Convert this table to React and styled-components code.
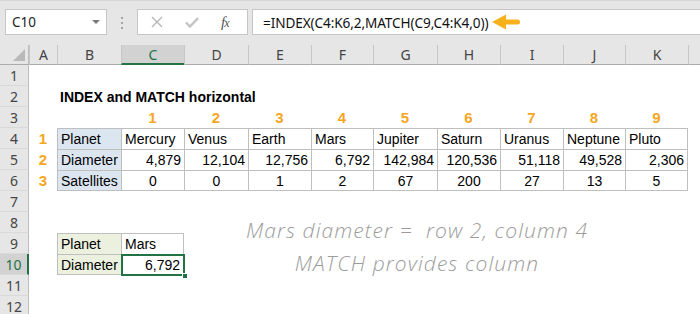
import React from 'react';
import styled, { createGlobalStyle } from 'styled-components';

const GlobalStyle = createGlobalStyle`
  html, body { margin: 0; padding: 0; background: #ffffff; }
  body { width: 700px; height: 314px; overflow: hidden; }
  * { box-sizing: border-box; }
`;

const GREEN = '#217346';
const ORANGE = '#f5a623';

const Frame = styled.div`
  width: 700px;
  height: 314px;
  overflow: hidden;
  background: #fff;
  display: flex;
  flex-direction: column;
`;

const Toolbar = styled.div`
  height: 45px;
  flex: none;
  background: #e6e6e6;
  border-top: 1px solid #d6d6d6;
  display: flex;
  align-items: flex-start;
  padding: 8px 0 0 5px;
  font-family: "Noto Sans", "Open Sans", sans-serif;
`;

const NameBox = styled.div`
  width: 102px;
  height: 26px;
  background: #fff;
  border: 1px solid #c6c6c6;
  display: flex;
  align-items: center;
  justify-content: space-between;
  padding: 0 6px 0 6px;
  font-size: 13.5px;
  color: #222;
`;

const DropTri = styled.span`
  width: 0;
  height: 0;
  border-left: 4px solid transparent;
  border-right: 4px solid transparent;
  border-top: 4px solid #7a7a7a;
`;

const Grip = styled.div`
  width: 2px;
  margin: 8px 14px 0 14px;
  display: flex;
  flex-direction: column;
  gap: 3px;
`;

const Dot = styled.span`
  width: 2px;
  height: 2px;
  background: #a4a4a4;
`;

const FxButtons = styled.div`
  width: 111px;
  height: 26px;
  background: #fff;
  border: 1px solid #c6c6c6;
  display: flex;
  align-items: center;
  padding-left: 13px;
`;

const IconSlot = styled.span`
  display: inline-flex;
  align-items: center;
  justify-content: center;
  margin-right: ${(p) => p.$gap}px;
`;

const FxLabel = styled.span`
  font-family: "Liberation Serif", "DejaVu Serif", serif;
  font-style: italic;
  color: #555;
  font-size: 15px;
  letter-spacing: -1px;
  & > small { font-size: 12px; }
`;

const FormulaBox = styled.div`
  flex: 1;
  height: 26px;
  margin-left: 4px;
  background: #fff;
  border: 1px solid #c6c6c6;
  border-right: none;
  display: flex;
  align-items: center;
  padding-left: 10px;
  gap: 4px;
  font-size: 13.6px;
  color: #111;
`;

const FormulaText = styled.span`
  white-space: nowrap;
  letter-spacing: -0.1px;
`;

const Sheet = styled.div`
  position: relative;
  flex: 1;
  display: grid;
  grid-template-columns: 29px 28px 64px 63px 64px 63px 62px 64px 63px 63px 62px 63px 1fr;
  grid-template-rows: 20px repeat(12, 21px);
  font-family: "Liberation Sans", Arial, sans-serif;
  font-size: 14px;
  color: #000;
`;

const Corner = styled.div`
  background: #e6e6e6;
  border-right: 1px solid #bdbdbd;
  border-bottom: 1px solid #ababab;
  position: relative;
  display: flex;
  align-items: flex-end;
  justify-content: flex-end;
  padding: 0 3px 3px 0;
`;

const CornerTri = styled.span`
  width: 0;
  height: 0;
  border-left: 12px solid transparent;
  border-bottom: 12px solid #b9b9b9;
`;

const ColHeader = styled.div`
  background: ${(p) => (p.$sel ? '#d2d2d2' : '#e6e6e6')};
  border-left: 1px solid #c6c6c6;
  border-bottom: ${(p) => (p.$sel ? `2px solid ${GREEN}` : '1px solid #ababab')};
  color: ${(p) => (p.$sel ? GREEN : '#444')};
  font-family: "Noto Sans", "Open Sans", sans-serif;
  font-size: 14px;
  display: flex;
  align-items: center;
  justify-content: center;
  padding-top: ${(p) => (p.$sel ? '1px' : '0')};
`;

const RowHeader = styled.div`
  background: ${(p) => (p.$sel ? '#d2d2d2' : '#e6e6e6')};
  border-right: ${(p) => (p.$sel ? `2px solid ${GREEN}` : '1px solid #bdbdbd')};
  border-bottom: 1px solid #d9d9d9;
  color: ${(p) => (p.$sel ? GREEN : '#444')};
  font-family: "Noto Sans", "Open Sans", sans-serif;
  font-size: 14px;
  display: flex;
  align-items: center;
  justify-content: center;
`;

const Cell = styled.div`
  position: relative;
  background: ${(p) => p.$bg || 'transparent'};
  border-top: ${(p) => (p.$bt ? '1px solid #bfbfbf' : 'none')};
  border-left: ${(p) => (p.$bl ? '1px solid #bfbfbf' : 'none')};
  border-right: ${(p) => (p.$br ? '1px solid #bfbfbf' : 'none')};
  border-bottom: ${(p) => (p.$bb ? '1px solid #bfbfbf' : 'none')};
  display: flex;
  justify-content: ${(p) =>
    p.$align === 'right' ? 'flex-end' : p.$align === 'center' ? 'center' : 'flex-start'};
  padding: ${(p) => (p.$bt ? '1px' : '2px')} 3px 0 3px;
  line-height: 18px;
  white-space: nowrap;
  font-weight: ${(p) => (p.$bold ? 700 : 400)};
  color: ${(p) => p.$color || '#000'};
  font-size: ${(p) => (p.$big ? '15px' : '14px')};
  z-index: ${(p) => (p.$over ? 1 : 0)};
`;

const Selection = styled.div`
  position: absolute;
  top: -1px;
  left: -1px;
  right: -2px;
  bottom: -2px;
  border: 2px solid ${GREEN};
  pointer-events: none;
`;

const Handle = styled.span`
  position: absolute;
  right: -5px;
  bottom: -5px;
  width: 6px;
  height: 6px;
  background: ${GREEN};
  border: 1px solid #fff;
`;

const Note = styled.div`
  position: absolute;
  left: 217px;
  top: 169px;
  width: 400px;
  text-align: center;
  font-family: "Open Sans", "Noto Sans", sans-serif;
  font-style: italic;
  font-weight: 300;
  font-size: 21px;
  letter-spacing: 1.1px;
  line-height: 33px;
  color: #9c9c9c;
  white-space: pre;
  z-index: 2;
`;

const LETTERS = ['A', 'B', 'C', 'D', 'E', 'F', 'G', 'H', 'I', 'J', 'K', ''];
const planets = ['Mercury', 'Venus', 'Earth', 'Mars', 'Jupiter', 'Saturn', 'Uranus', 'Neptune', 'Pluto'];
const diam = ['4,879', '12,104', '12,756', '6,792', '142,984', '120,536', '51,118', '49,528', '2,306'];
const sats = ['0', '0', '1', '2', '67', '200', '27', '13', '5'];

function cellSpec(r, c) {
  // c: 0 = A ... 10 = K, 11 = L
  const s = {};
  if (r === 2 && c === 1) return { text: 'INDEX and MATCH horizontal', bold: true, over: true };
  if (r === 3 && c >= 2 && c <= 10) return { text: String(c - 1), bold: true, big: true, color: ORANGE, align: 'center' };
  if (r >= 4 && r <= 6 && c === 0) return { text: String(r - 3), bold: true, big: true, color: ORANGE, align: 'center' };
  if (r >= 4 && r <= 6 && c >= 1 && c <= 10) {
    s.bt = true; s.bl = true; s.br = c === 10; s.bb = r === 6;
    if (c === 1) {
      s.bg = '#dce6f1';
      s.text = ['Planet', 'Diameter', 'Satellites'][r - 4];
    } else if (r === 4) {
      s.text = planets[c - 2];
    } else if (r === 5) {
      s.text = diam[c - 2]; s.align = 'right';
    } else {
      s.text = sats[c - 2]; s.align = 'center';
    }
    return s;
  }
  if ((r === 9 || r === 10) && (c === 1 || c === 2)) {
    s.bt = true; s.bl = true; s.br = c === 2; s.bb = r === 10;
    if (c === 1) { s.bg = '#ebf1de'; s.text = r === 9 ? 'Planet' : 'Diameter'; }
    else if (r === 9) s.text = 'Mars';
    else { s.text = '6,792'; s.align = 'right'; s.sel = true; }
    return s;
  }
  return s;
}

function CloseIcon() {
  return (
    <svg width="12" height="12" viewBox="0 0 12 12">
      <path d="M1 1 L11 11 M11 1 L1 11" stroke="#b5b5b5" strokeWidth="1.3" fill="none" />
    </svg>
  );
}

function CheckIcon() {
  return (
    <svg width="14" height="11" viewBox="0 0 14 11">
      <path d="M1 5.5 L5 9.5 L13 1.2" stroke="#c4c4c4" strokeWidth="2.4" fill="none" />
    </svg>
  );
}

function Arrow() {
  return (
    <svg width="28" height="16" viewBox="0 0 28 16">
      <path d="M0 8 L14 0.5 L14 15.5 Z" fill="#f7b11c" />
      <rect x="12" y="5.5" width="16" height="5" rx="2.5" fill="#f7b11c" />
    </svg>
  );
}

export default function App() {
  const rows = [];
  for (let r = 1; r <= 12; r++) {
    rows.push(
      <RowHeader key={`rh${r}`} $sel={r === 10}>{r}</RowHeader>
    );
    for (let c = 0; c < 12; c++) {
      const s = cellSpec(r, c);
      rows.push(
        <Cell
          key={`c${r}-${c}`}
          $bg={s.bg}
          $bt={s.bt}
          $bl={s.bl}
          $br={s.br}
          $bb={s.bb}
          $align={s.align}
          $bold={s.bold}
          $big={s.big}
          $color={s.color}
          $over={s.over || s.sel}
        >
          {s.text}
          {s.sel && (
            <Selection>
              <Handle />
            </Selection>
          )}
        </Cell>
      );
    }
  }

  return (
    <Frame>
      <GlobalStyle />
      <Toolbar>
        <NameBox>
          <span>C10</span>
          <DropTri />
        </NameBox>
        <Grip>
          <Dot />
          <Dot />
          <Dot />
        </Grip>
        <FxButtons>
          <IconSlot $gap={22}><CloseIcon /></IconSlot>
          <IconSlot $gap={22}><CheckIcon /></IconSlot>
          <FxLabel>f<small>x</small></FxLabel>
        </FxButtons>
        <FormulaBox>
          <FormulaText>=INDEX(C4:K6,2,MATCH(C9,C4:K4,0))</FormulaText>
          <Arrow />
        </FormulaBox>
      </Toolbar>
      <Sheet>
        <Corner><CornerTri /></Corner>
        {LETTERS.map((l, i) => (
          <ColHeader key={`h${i}`} $sel={l === 'C'}>{l}</ColHeader>
        ))}
        {rows}
        <Note>{'Mars diameter =  row 2, column 4\nMATCH provides column'}</Note>
      </Sheet>
    </Frame>
  );
}
